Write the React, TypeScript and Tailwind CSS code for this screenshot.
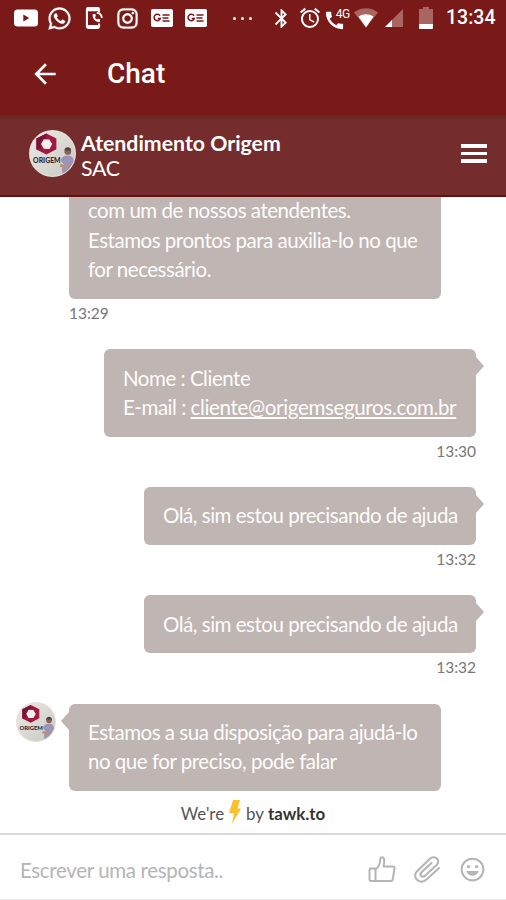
import type { ReactNode } from 'react';
import clsx from 'clsx';
import { FaInstagram, FaWhatsapp } from 'react-icons/fa';
import { MdAlarm, MdArrowBack, MdBluetooth, MdCall } from 'react-icons/md';

type Message = {
  id: number;
  side: 'agent' | 'visitor';
  width: string;
  lines: ReactNode[];
  time?: string;
  avatar?: boolean;
  tail?: boolean;
};

const messages: Message[] = [
  {
    id: 1,
    side: 'agent',
    width: 'w-[372px]',
    lines: ['com um de nossos atendentes.', 'Estamos prontos para auxilia-lo no que', 'for necessário.'],
    time: '13:29',
  },
  {
    id: 2,
    side: 'visitor',
    width: 'w-[372px]',
    lines: [
      'Nome : Cliente',
      <>
        E-mail :{' '}
        <a className="tracking-[-0.340px] underline decoration-2 underline-offset-2">cliente@origemseguros.com.br</a>
      </>,
    ],
    time: '13:30',
    tail: true,
  },
  {
    id: 3,
    side: 'visitor',
    width: 'w-[332px]',
    lines: ['Olá, sim estou precisando de ajuda'],
    time: '13:32',
    tail: true,
  },
  {
    id: 4,
    side: 'visitor',
    width: 'w-[332px]',
    lines: ['Olá, sim estou precisando de ajuda'],
    time: '13:32',
    tail: true,
  },
  {
    id: 5,
    side: 'agent',
    width: 'w-[372px]',
    lines: ['Estamos a sua disposição para ajudá-lo', 'no que for preciso, pode falar'],
    avatar: true,
    tail: true,
  },
];

function Avatar({ className }: { className?: string }) {
  return (
    <svg viewBox="0 0 46 46" className={clsx('shrink-0', className)}>
      <defs>
        <clipPath id="avatar-clip">
          <circle cx="23" cy="23" r="22" />
        </clipPath>
        <linearGradient id="avatar-bg" x1="0" y1="0" x2="1" y2="1">
          <stop offset="0" stopColor="#ebeae4" />
          <stop offset="1" stopColor="#c9c9c3" />
        </linearGradient>
      </defs>
      <circle cx="23" cy="23" r="23" fill="#e9e2dd" />
      <g clipPath="url(#avatar-clip)">
        <rect width="46" height="46" fill="url(#avatar-bg)" />
        <path d="M17 3.500l9.800 4.800v10.500L17 24l-9.800-5V8.300z" fill="#a11843" />
        <path d="M7.200 8.300L17 3.500v5L12 12v6l-4.800 1z" fill="#7d1436" />
        <path d="M14.500 9l5.500.2 2.700 4.600-2.700 4.700-5.500-.2-2.700-4.600z" fill="#f3efeb" />
        <path d="M31 30c1-4 4-5 7-5s6 2 6 6v12H33l-1-5 3-3z" fill="#9c93b5" />
        <path d="M31 33l8 3-1 2-8-2z" fill="#b98f7c" />
        <circle cx="38" cy="21" r="3.300" fill="#8a6355" />
        <path d="M34.700 20c0-4 6.600-4 6.600 0z" fill="#4b4345" />
        <text
          x="4"
          y="32.500"
          fontSize="7"
          fontWeight="900"
          fontFamily="Lato, sans-serif"
          fill="#33282d"
          textLength="27"
          lengthAdjust="spacingAndGlyphs"
        >
          ORIGEM
        </text>
      </g>
    </svg>
  );
}

function NewsIcon({ className }: { className?: string }) {
  return (
    <svg viewBox="0 0 22 18" className={clsx('h-[18px] w-[22px]', className)}>
      <rect width="22" height="18" rx="1.800" fill="#fff" />
      <path d="M9 6.800A3.200 3.200 0 1 0 9.300 9.500H6.800" fill="none" stroke="#7a1a18" strokeWidth="1.500" />
      <path d="M11.500 6h7M11.500 9h6M11.500 12h7" stroke="#7a1a18" strokeWidth="1.300" />
    </svg>
  );
}

function StatusBar() {
  return (
    <div className="flex h-9 items-center bg-[#7a1a18] pl-[14px] text-white">
      <svg viewBox="0 0 24 18" className="h-[18px] w-6">
        <rect y="0.500" width="24" height="17" rx="3.500" fill="#fff" />
        <path d="M9.300 5.500v7l6-3.500z" fill="#7a1a18" />
      </svg>
      <FaWhatsapp strokeWidth={8} className="ml-[9px] h-[25px] w-[25px]" />
      <svg viewBox="0 0 19 24" className="ml-[13px] h-[22px] w-[19px]">
        <path
          d="M14.500 6V2.600c0-.8-.6-1.400-1.400-1.400H2.600c-.8 0-1.400.6-1.400 1.400v18.800c0 .8.600 1.400 1.400 1.400h10.500c.8 0 1.400-.6 1.400-1.400V18"
          fill="none"
          stroke="#fff"
          strokeWidth="2.200"
        />
        <path d="M1.500 1.500h13v3h-13zM1.500 19.500h13v3.500h-13z" fill="#fff" />
        <path
          d="M7.500 8c-.6 4.500 3 8.500 7.500 8.700l.9-3.100-2.600-.9-1.100.9c-1-.5-1.900-1.600-2.200-2.700l1-1-.7-2.500z"
          fill="#fff"
        />
        <path d="M12 6.500c3 .2 5.300 2.500 5.500 5.500" fill="none" stroke="#fff" strokeWidth="2" />
      </svg>
      <FaInstagram strokeWidth={8} className="ml-3 h-[23px] w-[23px]" />
      <NewsIcon className="ml-3" />
      <NewsIcon className="ml-3" />
      <div className="ml-[26px] flex w-[19px] justify-between">
        <span className="size-[3px] rounded-full bg-white" />
        <span className="size-[3px] rounded-full bg-white" />
        <span className="size-[3px] rounded-full bg-white" />
      </div>
      <MdBluetooth className="ml-[18px] h-[23px] w-[23px]" />
      <MdAlarm className="ml-[5px] h-6 w-6" />
      <div className="relative ml-px h-[23px] w-[26px]">
        <MdCall className="mt-0.5 h-[23px] w-[23px]" />
        <span className="absolute top-0.5 -right-px bg-[#7a1a18] font-[Roboto,sans-serif] text-[12px]/[11px] tracking-[-0.3px]">
          4G
        </span>
      </div>
      <svg viewBox="0 0 24 20" className="ml-[5px] h-5 w-6">
        <path d="M0 4.500C7-1.300 17-1.300 24 4.500L12 19.500z" fill="#a96562" />
        <path d="M4.500 8.500c5-3 10-3 15 0L12 19.500z" fill="#fff" />
      </svg>
      <svg viewBox="0 0 18 18" className="ml-[7px] h-[18px] w-[18px]">
        <path d="M18 0v18H0z" fill="#a96562" />
        <path d="M7 11v7H0z" fill="#fff" />
      </svg>
      <svg viewBox="0 0 14 22" className="ml-4 h-[22px] w-[14px]">
        <path d="M4 0h6v2h4v20H0V2h4z" fill="#a96562" />
        <path d="M0 17h14v4a1 1 0 0 1-1 1H1a1 1 0 0 1-1-1z" fill="#fff" />
      </svg>
      <span className="ml-[13px] font-[Roboto,sans-serif] text-[19.500px]/[24px] font-medium">13:34</span>
    </div>
  );
}

function Bubble({ message }: { message: Message }) {
  const isAgent = message.side === 'agent';

  return (
    <div className={clsx('flex shrink-0 pr-[30px]', isAgent ? 'justify-start pl-4' : 'justify-end')}>
      {isAgent && (
        <div className="w-[53px] shrink-0">{message.avatar && <Avatar className="-mt-0.5 h-10 w-10" />}</div>
      )}
      <div className={message.width}>
        <div className="relative rounded-md bg-[#bfb5b3] px-[19px] py-[14.250px] text-[20.500px]/[29.500px] tracking-[-0.480px] text-[#fefcfb]">
          {message.tail && (
            <svg
              viewBox="0 0 8 18"
              className={clsx('absolute top-[8px] h-[18px] w-2', isAgent ? '-left-2 rotate-180' : '-right-2')}
            >
              <path d="M0 0l8 9-8 9z" fill="#bfb5b3" />
            </svg>
          )}
          {message.lines.map((line, i) => (
            <p key={i} className="whitespace-nowrap">
              {line}
            </p>
          ))}
        </div>
        {message.time && (
          <div className={clsx('h-[50.250px] pt-[3px] text-[15.500px]/[22px] text-[#777]', !isAgent && 'text-right')}>
            {message.time}
          </div>
        )}
      </div>
    </div>
  );
}

export default function App() {
  return (
    <div className="flex h-[900px] w-[506px] flex-col overflow-hidden bg-white font-[Lato,sans-serif]">
      <StatusBar />

      {/* App bar */}
      <div className="flex h-[79px] items-center bg-[#7a1a18] pb-[3px] text-white">
        <MdArrowBack className="ml-[29px] h-8 w-8" />
        <h1 className="ml-[46px] font-[Roboto,sans-serif] text-[28px]/[32px] font-medium">Chat</h1>
      </div>

      {/* Agent header */}
      <div className="flex h-[82px] items-center border-t-4 border-b-2 border-t-[#6b2826] border-b-[#651110] bg-[#742c2c] pr-[19px] pb-[7px] pl-[29px] text-white">
        <Avatar className="h-[47px] w-[47px]" />
        <div className="mt-1 ml-[5px] flex-1 text-[21.300px]/[25px]">
          <div className="font-bold">Atendimento Origem</div>
          <div className="tracking-[-0.300px]">SAC</div>
        </div>
        <div className="flex w-[26px] flex-col gap-1">
          <span className="h-[3.500px] bg-white" />
          <span className="h-[3.500px] bg-white" />
          <span className="h-[3.500px] bg-white" />
        </div>
      </div>

      {/* Conversation, scrolled to the latest message */}
      <div className="flex h-[594px] flex-col justify-end overflow-hidden">
        {messages.map((message) => (
          <Bubble key={message.id} message={message} />
        ))}
      </div>

      <div className="flex h-[42px] items-center justify-center pt-1 text-[16.900px] text-[#555]">
        We're
        <svg viewBox="0 0 12 24" className="mx-[5px] -mt-1 h-6 w-3">
          <path d="M4 0h7L8.500 8.500H12L3 24l2-11H0z" fill="#fbc02d" />
        </svg>
        by&nbsp;<b className="text-[#333]">tawk.to</b>
      </div>

      {/* Reply box */}
      <div className="flex h-[67px] items-center border-t-2 border-b border-t-[#d9d9d9] border-b-[#e8e8e8] pt-1 pr-[21px] pl-5">
        <span className="flex-1 pt-0.5 text-[20.500px] tracking-[-0.350px] text-[#b5b5b5]">Escrever uma resposta..</span>
        <div className="flex items-center text-[#b5b5b5]">
          <svg viewBox="0 0 28 28" className="h-7 w-7" fill="none" stroke="currentColor" strokeWidth="2" strokeLinejoin="round">
            <path d="M2 13.500h5.500v12.500H3a1.500 1.500 0 0 1-1.500-1.500V15z" />
            <path d="M7.500 14.500c3-2 4.500-5 4.700-9.500 0-3.500 3.800-4 4 0 .2 2.500-.2 4.500-.7 6.500H25c1.200 0 1.700.8 1.500 2l-1.800 11c-.2 1-.8 1.500-1.800 1.500H7.500" />
          </svg>
          <svg
            viewBox="0 0 28 28"
            className="ml-[17px] h-7 w-7"
            fill="none"
            stroke="currentColor"
            strokeWidth="2.100"
            strokeLinecap="round"
            strokeLinejoin="round"
          >
            <path d="M26 13L13.500 24.500c-3 2.700-7 2.800-9.500.3s-2.500-6 .3-8.800L17 3.800c2-2 5-2 6.800-.2s1.800 4.500-.2 6.500L12 20.800c-1.200 1.200-2.800 1.200-3.800.2s-1-2.500.2-3.700L18.500 8" />
          </svg>
          <svg viewBox="0 0 26 26" className="ml-[19px] h-[25px] w-[25px]" fill="none">
            <circle cx="13" cy="13" r="11.300" stroke="currentColor" strokeWidth="2.100" />
            <circle cx="8.800" cy="10" r="1.800" fill="currentColor" />
            <circle cx="17.200" cy="10" r="1.800" fill="currentColor" />
            <path d="M6.500 14.500h13c-.8 3.300-3.300 5-6.500 5s-5.700-1.700-6.500-5z" fill="currentColor" />
          </svg>
        </div>
      </div>
    </div>
  );
}
